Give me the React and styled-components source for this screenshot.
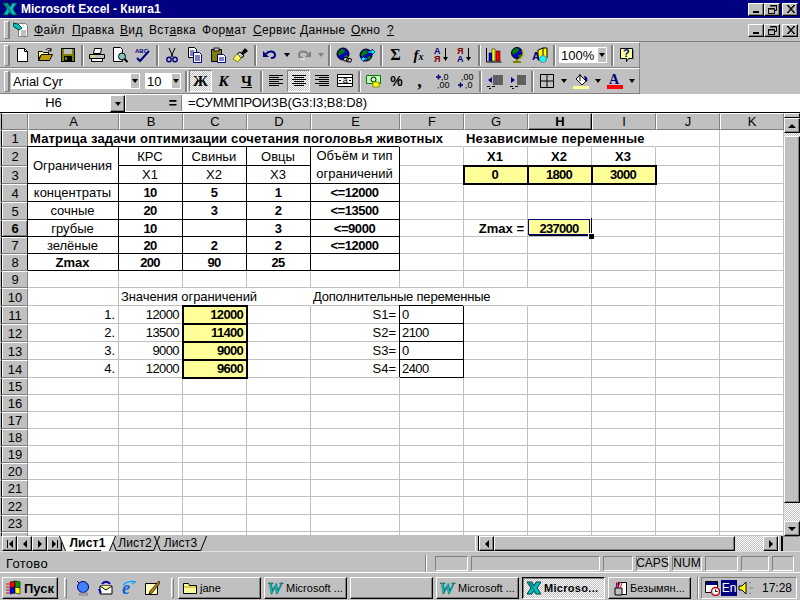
import React from 'react';
import styled, { createGlobalStyle, css } from 'styled-components';

const Global = createGlobalStyle`
  html, body { margin: 0; padding: 0; background: #c0c0c0; }
  * { box-sizing: border-box; }
`;
const raised = css`
  border: 1px solid;
  border-color: #fff #000 #000 #fff;
  box-shadow: inset -1px -1px 0 #808080;
  background: #c0c0c0;
`;
const sunken = css`
  border: 1px solid;
  border-color: #808080 #fff #fff #808080;
`;
const dither = css`
  background: repeating-conic-gradient(#fff 0 25%, #c0c0c0 0 50%) 0 0 / 2px 2px;
`;
const App_ = styled.div`
  width: 800px; height: 600px; overflow: hidden; display: flex; flex-direction: column;
  background: #c0c0c0; color: #000;
  font: 13px "Liberation Sans", Arial, sans-serif;
`;
const TitleBar = styled.div`
  height: 18px; background: #000080; color: #fff; display: flex; align-items: center;
  padding: 0 2px 0 2px; gap: 3px; font-weight: 700; font-size: 12px;
`;
const WinBtns = styled.div`display: flex; margin-left: auto;`;
const WinBtn = styled.div`
  ${raised}; width: 16px; height: 13px; display: flex; align-items: center; justify-content: center;
  margin-left: ${p => p.$gap ? 2 : 0}px;
`;
const MenuBar = styled.div`
  height: 24px; border-top: 1px solid #fff; border-bottom: 1px solid #808080;
  display: flex; align-items: center; padding: 0 2px 0 4px;
`;
const Grip = styled.div`
  width: 5px; height: ${p => p.$h || 21}px; flex: none;
  border: 1px solid; border-color: #fff #808080 #808080 #fff;
  box-shadow: 1px 0 0 #808080; margin-right: ${p => p.$mr || 0}px;
`;
const DocIcon = styled.div`width: 22px; margin-right: 2px; height: 16px; display: flex; justify-content: center; margin-left: 1px;`;
const MenuItem = styled.span`
  display: block; flex: none; width: ${p => p.$w}px; font-size: 12px; letter-spacing: .35px;
`;
const ToolArea = styled.div`width: 640px; display: flex; flex-direction: column;`;
const Toolbar = styled.div`
  height: 26px; display: flex; align-items: center; padding-left: 4px;
  border-top: 1px solid #fff; border-bottom: 1px solid #808080; border-right: 1px solid #808080;
`;
const ToolBtn = styled.div`
  width: 23px; height: 22px; flex: none; display: flex; align-items: center; justify-content: center;
  ${p => p.$pressed && css`${dither}; border: 1px solid; border-color: #808080 #fff #fff #808080;`}
`;
const Drop = styled.div`
  width: 11px; height: 22px; flex: none; display: flex; align-items: center; justify-content: center;
`;
const Caret = styled.i`
  display: block; width: 0; height: 0; border: solid transparent; border-width: 4px 3.5px 0;
  border-top-color: ${p => p.$off ? '#808080' : '#000'};
`;
const Sep = styled.div`
  width: 6px; flex: none; height: 21px; display: flex; justify-content: center;
  &::before { content: ''; width: 2px; height: 100%; background: #808080; border-right: 1px solid #fff; }
`;
const ComboBox = styled.div`
  width: ${p => p.$w}px; height: 16px; background: #fff; display: flex; align-items: center; flex: none;
  margin-left: ${p => p.$ml || 0}px; margin-right: ${p => p.$mr || 0}px; padding-left: 2px; font-size: 13px;
`;
const ComboArrow = styled.div`
  margin-left: auto; width: 10px; height: 100%; background: #c0c0c0; display: flex; align-items: center; justify-content: center;
  border: 1px solid #fff;
`;
const GlyphBold = styled.span`
  font: 700 ${p => p.$s || 14}px "Liberation Serif", serif; font-style: ${p => p.$i ? 'italic' : 'normal'};
  text-decoration: ${p => p.$u ? 'underline' : 'none'}; line-height: 1;
`;
const FormulaBar = styled.div`
  height: 19px; display: flex; background: #fff; border-bottom: 1px solid #000; padding-bottom: 1px; border-top: 1px solid #fff;
`;
const NameBox = styled.div`width: 110px; text-align: center; line-height: 16px; padding-right: 3px;`;
const NameArrow = styled.div`${raised}; width: 15px; height: 17px; display: flex; align-items: center; justify-content: center;`;
const FormulaGap = styled.div`
  width: 57px; background: #c0c0c0; border-left: 1px solid #fff; border-right: 1px solid #808080; font-weight: 700; font-size: 14px; line-height: 16px;
  text-align: right; padding-right: 4px;
`;
const FormulaText = styled.div`padding-left: 6px; line-height: 16px; flex: 1; letter-spacing: -.06px;`;
const SheetRow = styled.div`height: 423px; display: flex; border-left: 1px solid #c0c0c0;`;
const Sheet = styled.div`
  width: 783px; height: 423px; overflow: hidden; display: grid; background: #fff;
  grid-template-columns: 27px 91px 64px 64px 64px 89px 64px 64px 64px 64px 64px 64px;
  grid-template-rows: 17px 17px 19px 18px 18px 18px 17px 17px 17px 17px 18px 18px 18px 18px 18px 17px 17px 17px 17px 17px 17px 17px 18px 17px 4px;
`;
const headBevel = css`
  background: #c0c0c0; border: 1px solid;
  border-color: #fff #808080 #808080 #fff;
  ${p => p.$sel && 'border-color: #fff #000 #000 #fff; box-shadow: inset -1px -1px 0 #808080;'}
  font-weight: ${p => p.$sel ? 700 : 400};
  display: flex; align-items: center; justify-content: center; overflow: hidden;
`;
const Corner = styled.div`${headBevel}; border-left-color: #000;`;
const ColHead = styled.div`${headBevel}; line-height: 15px;`;
const RowHead = styled.div`
  ${headBevel}; border-left: 1px solid #000; box-shadow: inset 1px 0 0 #fff ${p => p.$sel ? ', inset -1px -1px 0 #808080' : ''};
  padding-left: 1px; grid-column: 1; grid-row: ${p => p.$row};
  ${p => p.$clip && 'align-items: flex-start; border-bottom: 0;'}
`;
const Cell = styled.div`
  position: relative; display: flex; align-items: center; white-space: nowrap; padding: 0 3px 0 2px; line-height: 1;
  grid-column: ${p => p.$col} / span ${p => p.$cs || 1};
  grid-row: ${p => p.$row} / span ${p => p.$rs || 1};
  border-right: 1px solid #c0c0c0; border-bottom: 1px solid #c0c0c0;
  border-left: ${p => p.$first ? '1px solid #c0c0c0' : '0'};
  justify-content: ${p => ({ c: 'center', r: 'flex-end', l: 'flex-start' }[p.$a || 'l'])};
  font-weight: ${p => p.$b ? 700 : 400};
  letter-spacing: ${p => p.$ls || 0}px;
  text-align: center;
  ${p => p.$noR && 'border-right-color: transparent;'}
  ${p => p.$box && css`
    border-right-color: #000; border-bottom-color: #000; box-shadow: -1px -1px 0 #000; z-index: 1;
  `}
  ${p => p.$thick && css`
    background: #ffff99; outline: 2px solid #000; outline-offset: -1px; border-color: transparent; z-index: 2;
  `}
  ${p => p.$yellow && 'background: #ffff99;'}
`;
const CellLines = styled.span`display: block; line-height: 18px;`;
const Selection = styled.div`
  position: absolute; left: 0; top: -1px; right: 1px; bottom: 1px; border: 1px solid #000080;
  &::before { content: ''; position: absolute; right: -3px; top: -2px; bottom: -2px; width: 1px; background: #000; }
  &::after { content: ''; position: absolute; left: 0; right: -3px; bottom: -2px; height: 1px; background: #000; }
`;
const Handle = styled.div`
  position: absolute; right: -5px; bottom: -5px; width: 6px; height: 6px; background: #000; border: 1px solid #fff; border-width: 1px 0 0 1px; z-index: 3;
`;
const VScroll = styled.div`width: 16px; height: 423px; display: flex; flex-direction: column;`;
const VSplit = styled.div`height: 5px; ${raised}; box-shadow: none;`;
const ArrowBtn = styled.div`
  ${raised}; width: ${p => p.$w || 16}px; height: ${p => p.$h || 15}px; flex: none; display: flex; align-items: center; justify-content: center;
`;
const Dither = styled.div`${dither}; flex: none; ${p => p.$h ? `height:${p.$h}px;` : ''} ${p => p.$w ? `width:${p.$w}px;` : ''}`;
const Thumb = styled.div`${raised}; flex: 1;`;
const TabRow = styled.div`
  height: 16px; display: flex; align-items: stretch; padding-left: 2px; border-bottom: 1px solid #dfdfdf;
`;
const TabNav = styled.div`
  ${raised}; width: 15px; display: flex; align-items: center; justify-content: center; flex: none;
`;
const Tabs = styled.div`display: flex; width: 413px; flex: none;`;
const Tab = styled.div`
  position: relative; width: ${p => p.$w}px; display: flex; align-items: center; justify-content: center; flex: none;
  font-weight: ${p => p.$on ? 700 : 400}; font-size: 12px; letter-spacing: .2px; z-index: ${p => p.$on ? 2 : 1};
  border-bottom: 1px solid #000; white-space: nowrap;
  background: ${p => p.$on ? '#fff' : 'transparent'}; margin: 0 4px;
  &::before, &::after {
    content: ''; position: absolute; top: 0; bottom: -1px; width: 8px; background: ${p => p.$on ? '#fff' : 'transparent'}; z-index: -1;
  }
  &::before { left: -4px; border-left: 1px solid #000; transform: skewX(22deg); }
  &::after { right: -4px; border-right: 1px solid #000; transform: skewX(-22deg); }
  & > span { position: relative; }
`;
const HSplit = styled.div`width: 4px; flex: none; background: #c0c0c0; border-left: 1px solid #fff; border-right: 1px solid #000;`;
const HThumb = styled.div`${raised}; width: 241px; flex: none;`;
const Corner2 = styled.div`width: 17px; flex: none; border-left: 1px solid #000; border-top: 1px solid #808080;`;
const StatusBar = styled.div`
  height: 20px; display: flex; align-items: center; padding: 2px 6px 0 6px; border-top: 1px solid transparent; gap: 3px; font-size: 13px;
`;
const Ready = styled.span`flex: 1; letter-spacing: .3px;`;
const StatusSep = styled.div`width: 2px; height: 18px; background: #808080; border-right: 1px solid #fff; margin-right: 5px;`;
const Panel = styled.div`
  ${sunken}; width: ${p => p.$w}px; height: 15px; flex: none; line-height: 13px; font-size: 12px;
  display: flex; justify-content: center; white-space: nowrap;
`;
const Taskbar = styled.div`
  height: 28px; display: flex; align-items: center; padding: 3px 3px 0 2px; border-top: 1px solid #fff;
`;
const StartBtn = styled.div`
  ${raised}; width: 56px; height: 22px; flex: none; display: flex; align-items: center; padding-left: 3px; gap: 2px;
  font-weight: 700; font-size: 13px;
`;
const TaskSep = styled.div`
  width: 2px; height: 22px; flex: none; background: #808080; border-right: 1px solid #fff; margin: 0 1px 0 3px;
`;
const TaskGrip = styled.div`
  width: 3px; height: 20px; flex: none; border: 1px solid; border-color: #fff #808080 #808080 #fff;
  margin: 0 ${p => p.$mr}px 0 ${p => p.$ml}px;
`;
const Quick = styled.div`width: 23px; display: flex; justify-content: center; flex: none;`;
const TaskBtn = styled.div`
  ${p => p.$on ? css`${dither}; border: 1px solid; border-color: #000 #fff #fff #000; box-shadow: inset 1px 1px 0 #808080; font-weight: 700; letter-spacing: .3px;` : raised};
  width: 83px; height: 22px; flex: none; margin-right: 3px; display: flex; align-items: center; gap: 2px; padding-left: 3px;
  white-space: nowrap; overflow: hidden; font-size: 11px;
`;
const Tray = styled.div`
  ${sunken}; width: 96px; height: 22px; flex: none; display: flex; align-items: center; padding-left: 2px; margin-left: auto;
`;
const EnBox = styled.div`width: 16px; height: 16px; background: #000080; color: #fff; line-height: 16px; text-align: center; flex: none; font-size: 12px; margin: 0 1px;`;
const Clock = styled.span`margin-left: 8px; font-size: 12px;`;
const Svg = ({ children, s = 16, w, h }) => <svg width={w || s} height={h || s} viewBox={`0 0 ${w || s} ${h || s}`} style={{ display: 'block', flex: 'none' }}>{children}</svg>;
const TinyText = styled.text`font: 700 6px "Liberation Sans", sans-serif;`;

const XLogo = () => <Svg><path d="M1 2h5l2 4 2-4h5l-4 6 4 6h-5l-2-4-2 4H1l4-6z" fill="#00c0c0" stroke="#004040" /><path d="M3 3h2l5 10h-1.500z" fill="#008080" /></Svg>;
const Min = () => <Svg w={8} h={8}><rect x="1" y="6" width="6" height="2" /></Svg>;
const Restore = () => <Svg w={9} h={9}><path d="M2.500.5h6v5h-2M.5 3.500h6v5h-6z" fill="none" stroke="#000" /><path d="M2 1h7M0 4h6" stroke="#000" /></Svg>;
const Close = () => <Svg w={9} h={8}><path d="M1 0l7 8M2 0l7 8M8 0L1 8M9 0L2 8" stroke="#000" /></Svg>;
const SheetDoc = () => <Svg><path d="M5.500 1.500h7l2 2v11h-9z" fill="#fff" stroke="#808080" /><path d="M0 1l5 1 4 4-3 2-5-3z" fill="#00c0c0" stroke="#004040" /><path d="M8 9h5M8 11h5M8 13h5" stroke="#808080" /></Svg>;
const NewI = () => <Svg><path d="M3.500 1.500h7l3 3v10h-10z" fill="#fff" stroke="#000" /><path d="M10.500 1.500v3h3" fill="none" stroke="#000" /></Svg>;
const OpenI = () => <Svg><path d="M1.500 4.500h4l1 1h5v3h-8l-2 5z" fill="#ffff99" stroke="#000" /><path d="M1.500 13.500l3-6h11l-3 6z" fill="#c0a000" stroke="#000" /><path d="M9 3c1-2 4-2 5 0M14 1v3h-3" fill="none" stroke="#000" /></Svg>;
const SaveI = () => <Svg><rect x="1.500" y="1.500" width="13" height="13" fill="#808000" stroke="#000" /><rect x="4" y="2" width="8" height="5" fill="#c0c0c0" /><rect x="4" y="9" width="8" height="5" fill="#000" /><rect x="5" y="10" width="2" height="3" fill="#808000" /></Svg>;
const PrintI = () => <Svg><path d="M5.500 1.500h7l-1 5h-7z" fill="#fff" stroke="#000" /><path d="M.5 7.500h15v4H.5z" fill="#c0c0c0" stroke="#000" /><path d="M2.500 11.500h11v3h-11z" fill="#fff" stroke="#000" /><path d="M3 9h3" stroke="#ff0" /></Svg>;
const PreviewI = () => <Svg><path d="M1.500.5h7l2 2v12h-9z" fill="#fff" stroke="#000" /><circle cx="10" cy="9.500" r="3.500" fill="#80c0c0" stroke="#000" /><path d="M12.500 12l3 3" stroke="#000" strokeWidth="2" /></Svg>;
const SpellI = () => <Svg><TinyText x="0" y="6" fill="#000080">ABC</TinyText><path d="M2 11l3 3 9-10" fill="none" stroke="#000080" strokeWidth="2" /></Svg>;
const CutI = () => <Svg><path d="M5 1l4 9M11 1L7 10" stroke="#000" fill="none" /><circle cx="5" cy="12.500" r="2.200" fill="none" stroke="#000080" strokeWidth="1.400" /><circle cx="11" cy="12.500" r="2.200" fill="none" stroke="#000080" strokeWidth="1.400" /></Svg>;
const CopyI = () => <Svg><path d="M1.500.5h6l2 2v8h-8z" fill="#fff" stroke="#000" /><path d="M6.500 5.500h6l2 2v8h-8z" fill="#fff" stroke="#000080" /><path d="M3 4h4M3 6h3M3 8h3M8 9h5M8 11h5M8 13h5" stroke="#000080" /></Svg>;
const PasteI = () => <Svg><path d="M1.500 2.500h10v12h-10z" fill="#808000" stroke="#000" /><rect x="4" y="1" width="5" height="3" fill="#c0c0c0" stroke="#000" strokeWidth=".8" /><path d="M7.500 7.500h6l2 2v6h-8z" fill="#fff" stroke="#000080" /><path d="M9 11h5M9 13h5" stroke="#000080" /></Svg>;
const PainterI = () => <Svg><path d="M12 1l3 3-5 4-2-2z" fill="#000" /><path d="M7 5l4 4-3 2-4-4z" fill="#c0c0c0" stroke="#000" /><path d="M4 7l4 4-3 4-5-3z" fill="#ffff66" stroke="#808000" /></Svg>;
const UndoI = () => <Svg><path d="M4 7c3-4 9-3 9 1 0 2-2 3-4 3" fill="none" stroke="#000080" strokeWidth="2" /><path d="M1 4v6h6z" fill="#000080" /></Svg>;
const RedoI = () => <Svg><path d="M12 7c-3-4-9-3-9 1 0 2 2 3 4 3" fill="none" stroke="#808080" strokeWidth="2" /><path d="M15 4v6H9z" fill="#808080" /><path d="M4 12h5" stroke="#fff" /></Svg>;
const Globe = ({ cx = 7, cy = 7, r = 6 }) => <><circle cx={cx} cy={cy} r={r} fill="#0000c0" stroke="#000" /><path d={`M${cx - 4} ${cy - 3}l3-2 3 1-1 3-3 1-1 2-2-2zM${cx + 1} ${cy + 2}l3-1 1 2-3 2z`} fill="#008000" /></>;
const WebI = () => <Svg><Globe /><rect x="7.500" y="10.500" width="5" height="3.500" rx="1.500" fill="#c0c0c0" stroke="#000" /><rect x="10.500" y="11.500" width="5" height="3.500" rx="1.500" fill="none" stroke="#000" /></Svg>;
const GlobeArrowI = () => <Svg><Globe cx={7} cy={8} /><path d="M9 4h4V2l3 3-3 3V6H9zM8 11h-3V9l-3 3 3 3v-2h3z" fill="#00ffff" stroke="#000080" strokeWidth=".7" /></Svg>;
const Sigma = () => <GlyphBold $s={16}>Σ</GlyphBold>;
const FxI = () => <GlyphBold $s={15} $i>f<small style={{ fontSize: 10 }}>x</small></GlyphBold>;
const SortI = ({ rev }) => <Svg><TinyText x="0" y="7" fill={rev ? '#800000' : '#000080'} style={{ fontSize: 9 }}>{rev ? 'Я' : 'А'}</TinyText><TinyText x="0" y="15" fill={rev ? '#000080' : '#800000'} style={{ fontSize: 9 }}>{rev ? 'А' : 'Я'}</TinyText><path d="M11.500 1v10" stroke="#000" /><path d="M9 10h5l-2.500 4z" /></Svg>;
const ChartI = () => <Svg><path d="M.500 1v14h15" stroke="#000" fill="none" /><rect x="3" y="6" width="3" height="8" fill="#0000ff" stroke="#000" strokeWidth=".5" /><rect x="6" y="2" width="3" height="12" fill="#ffff00" stroke="#000" strokeWidth=".5" /><rect x="10" y="4" width="4" height="10" fill="#ff0000" stroke="#000" strokeWidth=".5" /></Svg>;
const MapI = () => <Svg><Globe cx={8} cy={6} r={5.500} /><path d="M4 15h8M8 12v3" stroke="#808000" strokeWidth="2" /><path d="M13 3c2 3 1 7-3 9" fill="none" stroke="#c0a000" strokeWidth="1.500" /></Svg>;
const DrawI = () => <Svg><path d="M6 3l5-2h4v10l-4 2H6z" fill="#ffff00" stroke="#000" /><path d="M11 1v12" stroke="#000" /><TinyText x="0" y="13" fill="#000080" style={{ fontSize: 11 }}>A</TinyText><circle cx="11" cy="12" r="3.500" fill="#00ffff" stroke="#808080" /></Svg>;
const HelpI = () => <Svg><path d="M1.500 1.500h12v10h-4l-2 3v-3h-6z" fill="#ffff99" stroke="#000" /><path d="M14.500 3v10" stroke="#808080" /><text x="4" y="10" fill="#000080" style={{ font: '700 11px "Liberation Sans"' }}>?</text></Svg>;
const Lines = ({ rows }) => <Svg>{rows.map((r, i) => <path key={i} d={`M${r[0]} ${i * 2 + 2.500}h${r[1]}`} stroke="#000" />)}</Svg>;
const AL = () => <Lines rows={[[1, 14], [1, 10], [1, 14], [1, 10], [1, 14], [1, 10]]} />;
const AC = () => <Lines rows={[[1, 14], [3, 10], [1, 14], [3, 10], [1, 14], [3, 10]]} />;
const AR = () => <Lines rows={[[1, 14], [5, 10], [1, 14], [5, 10], [1, 14], [5, 10]]} />;
const MergeI = () => <Svg><path d="M.500 1.500h15v12H.500zM.500 4.500h15M.500 10.500h15" fill="#fff" stroke="#000" /><text x="5.800" y="10" style={{ font: '9px "Liberation Sans"' }}>a</text><path d="M2 7.500h2M14 7.500h-2" stroke="#000" /></Svg>;
const CurrencyI = () => <Svg><path d="M.500 2.500h14v8H.500z" fill="#c0ffc0" stroke="#008000" /><circle cx="7.500" cy="6.500" r="2.500" fill="none" stroke="#000" /><path d="M7 9h6v5H7z" fill="#ffff00" stroke="#808000" strokeWidth=".8" /></Svg>;
const Percent = styled.span`font-weight: 700; font-size: 14px;`;
const Comma = () => <GlyphBold $s={18}>,</GlyphBold>;
const SmallNum = styled.text`font: 9px "Liberation Sans", sans-serif;`;
const IncDec = () => <Svg w={18} h={16}><SmallNum x="7" y="7">,0</SmallNum><SmallNum x="3" y="15">,00</SmallNum><path d="M2 4h5M4.500 1.500v5" stroke="#000080" strokeWidth="1.500" /></Svg>;
const DecDec = () => <Svg w={18} h={16}><SmallNum x="4" y="7">,00</SmallNum><SmallNum x="8" y="15">,0</SmallNum><path d="M1 12h5M3.500 9.500v5" stroke="#000080" strokeWidth="1.500" /></Svg>;
const IndentL = () => <Svg><path d="M6 3h10M6 5h10M6 7h10M6 9h10M6 11h10" stroke="#000" /><path d="M1 7l4-3v6z" fill="#000080" /><path d="M0 13.500h3M5 13.500h3M2 15.500h2" stroke="#000" /></Svg>;
const IndentR = () => <Svg><path d="M7 3h9M7 5h9M7 7h9M7 9h9M7 11h9" stroke="#000" /><path d="M5 7L1 4v6z" fill="#000080" /><path d="M0 13.500h3M5 13.500h3M2 15.500h2" stroke="#000" /></Svg>;
const BordersI = () => <Svg w={14} h={14}><path d="M.500.500h13v13H.500zM7 .500v13M.500 7h13" fill="none" stroke="#000" /></Svg>;
const FillI = () => <Svg><path d="M3 6l4-4 6 6-4 4z" fill="#fff" stroke="#000" /><path d="M7 1v7" stroke="#000" /><path d="M11 3c3 0 4 3 3 6l-2-2z" fill="#000080" /><rect y="13" width="16" height="4" fill="#ffff99" /></Svg>;
const ColorI = () => <Svg><text x="2" y="11" fill="#000080" style={{ font: '700 14px "Liberation Serif"' }}>A</text><rect y="12" width="16" height="4" fill="#ff0000" /></Svg>;
const Tri = ({ d }) => {
  const p = { u: 'M4 0l4 4H0z', d: 'M0 0h8L4 4z', l: 'M4 0v8L0 4z', r: 'M0 0v8l4-4z' }[d];
  const vert = d === 'u' || d === 'd';
  return <Svg w={vert ? 8 : 4} h={vert ? 4 : 8}><path d={p} /></Svg>;
};
const TabFirst = () => <Svg w={6} h={8}><path d="M0 0h1v8H0zM6 0v8L2 4z" /></Svg>;
const TabLast = () => <Svg w={6} h={8}><path d="M5 0h1v8H5zM0 0v8l4-4z" /></Svg>;
const FlagI = () => <Svg><path d="M4 2l5-1v6l-5 1z" fill="#ff0000" stroke="#000" strokeWidth=".6" /><path d="M9 1l5 1v6l-5-1z" fill="#00a000" stroke="#000" strokeWidth=".6" /><path d="M4 8l5-1v6l-5 1z" fill="#0000ff" stroke="#000" strokeWidth=".6" /><path d="M9 7l5 1v6l-5-1z" fill="#ffff00" stroke="#000" strokeWidth=".6" /><path d="M0 4h3M0 7h3M0 10h3M0 13h3" stroke="#f00" /></Svg>;
const DishI = () => <Svg><path d="M2 1l9 9" stroke="#000" /><ellipse cx="8" cy="7" rx="5.500" ry="5.500" fill="#4080ff" stroke="#000080" /><path d="M5 13h7l1 2H4z" fill="#c0c0c0" stroke="#808080" /></Svg>;
const OutlookI = () => <Svg><path d="M2 6h12v8H2z" fill="#fff" stroke="#000" /><path d="M2 6l6 4 6-4" fill="#ffff99" stroke="#000" /><path d="M4 4c2-3 6-3 8 0" fill="none" stroke="#0000c0" strokeWidth="2" /><path d="M1 9l2 4" stroke="#0000c0" strokeWidth="2" /></Svg>;
const IEI = () => <Svg><text x="1" y="14" fill="#0060e0" style={{ font: 'italic 700 18px "Liberation Serif"' }}>e</text><path d="M2 5c4-4 10-4 13-3-2 0-3 1-4 2" fill="none" stroke="#00a0ff" strokeWidth="1.200" /></Svg>;
const NoteI = () => <Svg><path d="M1.500 3.500h12v11h-12z" fill="#ffffc0" stroke="#000" /><path d="M15 1L6 11l-1 3 3-1 8-10z" fill="#c08000" stroke="#000" strokeWidth=".7" /></Svg>;
const FolderI = () => <Svg><path d="M1.500 3.500h5l1 2h7v8h-13z" fill="#ffff99" stroke="#000" /><path d="M2 7h12" stroke="#c0a000" /></Svg>;
const WordI = () => <Svg><text x="-1" y="14" fill="#00c0c0" stroke="#004040" strokeWidth=".4" style={{ font: 'italic 700 17px "Liberation Serif"' }}>W</text></Svg>;
const PaintI = () => <Svg><path d="M6.500 2.500h8v12h-8z" fill="#fff" stroke="#000" /><path d="M3 8h7v7H3z" fill="#c0c0c0" stroke="#000" /><path d="M4 8l1-6M6 8l2-6M8 8l2-5" stroke="#f00" /><path d="M5 8l0-5" stroke="#00f" /></Svg>;
const CalendarI = () => <Svg><path d="M1.500 1.500h12v11h-12z" fill="#fff" stroke="#000" /><rect x="2" y="2" width="11" height="3" fill="#000080" /><circle cx="11.500" cy="11.500" r="4" fill="#fff" stroke="#c00000" strokeWidth="1.500" /><path d="M11.500 9.500v2h2" stroke="#000" fill="none" /></Svg>;
const SpeakerI = () => <Svg><path d="M1 6h3l4-4v12l-4-4H1z" fill="#ffff00" stroke="#000" /><path d="M11 3l2-1M11 8h4M11 13l2 1" stroke="#808080" /></Svg>;

const COLS = 'ABCDEFGHIJK'.split('');
const ROWN = Array.from({ length: 24 }, (_, i) => i + 1);
const C = Object.fromEntries(COLS.map((c, i) => [c, i + 2]));
const R = n => n + 1;
const NUM = -.6;
const BNUM = -.7;

const spec = [
  ['A', 1, 'Матрица задачи оптимизации сочетания поголовья животных', { $cs: 6, $b: 1, $ls: .18 }],
  ['G', 1, 'Независимые переменные', { $cs: 3, $b: 1, $ls: .22, $noR: 1 }],
  ['A', 2, 'Ограничения', { $rs: 2, $a: 'c', $box: 1 }],
  ['B', 2, 'КРС', { $a: 'c', $box: 1 }], ['C', 2, 'Свиньи', { $a: 'c', $box: 1 }], ['D', 2, 'Овцы', { $a: 'c', $box: 1 }],
  ['E', 2, <CellLines>Объём и тип<br />ограничений</CellLines>, { $rs: 2, $a: 'c', $box: 1 }],
  ['B', 3, 'Х1', { $a: 'c', $box: 1 }], ['C', 3, 'Х2', { $a: 'c', $box: 1 }], ['D', 3, 'Х3', { $a: 'c', $box: 1 }],
  ['G', 2, 'Х1', { $a: 'c', $b: 1 }], ['H', 2, 'Х2', { $a: 'c', $b: 1 }], ['I', 2, 'Х3', { $a: 'c', $b: 1 }],
  ['G', 3, '0', { $a: 'c', $b: 1, $thick: 1 }], ['H', 3, '1800', { $a: 'c', $b: 1, $thick: 1, $ls: BNUM }], ['I', 3, '3000', { $a: 'c', $b: 1, $thick: 1, $ls: BNUM }],
  ...[
    [4, 'концентраты', '10', '5', '1', '<=12000'],
    [5, 'сочные', '20', '3', '2', '<=13500'],
    [6, 'грубые', '10', '', '3', '<=9000'],
    [7, 'зелёные', '20', '2', '2', '<=12000'],
    [8, 'Zmax', '200', '90', '25', ''],
  ].flatMap(([r, a, b, c, d, e]) => [
    ['A', r, a, { $a: 'c', $box: 1, $b: r === 8 }],
    ['B', r, b, { $a: 'c', $box: 1, $b: 1, $ls: BNUM }], ['C', r, c, { $a: 'c', $box: 1, $b: 1, $ls: BNUM }],
    ['D', r, d, { $a: 'c', $box: 1, $b: 1, $ls: BNUM }], ['E', r, e, { $a: 'c', $box: 1, $b: 1, $ls: -.45 }],
  ]),
  ['G', 6, 'Zmax =', { $a: 'r', $b: 1 }],
  ['B', 10, 'Значения ограничений', { $cs: 3, $ls: -.08 }],
  ['E', 10, 'Дополнительные переменные', { $cs: 3, $ls: -.2 }],
  ...[[11, '1.', '12000', '12000', 'S1=', '0'], [12, '2.', '13500', '11400', 'S2=', '2100'], [13, '3.', '9000', '9000', 'S3=', '0'], [14, '4.', '12000', '9600', 'S4=', '2400']]
    .flatMap(([r, a, b, c, e, f]) => [
      ['A', r, a, { $a: 'r' }], ['B', r, b, { $a: 'r', $ls: NUM }],
      ['C', r, c, { $a: 'r', $b: 1, $thick: 1, $ls: BNUM }],
      ['E', r, e, { $a: 'r' }], ['F', r, f, { $box: 1, $ls: NUM }],
    ]),
];
const taken = new Set();
spec.forEach(([c, r, , o]) => {
  const ci = COLS.indexOf(c);
  for (let i = 0; i < (o.$cs || 1); i++) for (let j = 0; j < (o.$rs || 1); j++) taken.add(COLS[ci + i] + (r + j));
});
const plain = [];
ROWN.forEach(r => COLS.forEach(c => { if (!taken.has(c + r) && !(c === 'H' && r === 6)) plain.push([c, r]); }));

const menus = [['Ф', 'айл', '', 38], ['П', 'равка', '', 48], ['В', 'ид', '', 29], ['Вст', 'а', 'вка', 53], ['Фор', 'м', 'ат', 51], ['С', 'ервис', '', 47], ['Д', 'анные', '', 51], ['О', 'кно', '', 36], ['?', '', '', 12]];
const renderMenu = ([a, b, c, w], i) => {
  const mid = i === 3 || i === 4;
  return <MenuItem key={i} $w={w}>{mid ? <>{a}<u>{b}</u>{c}</> : <><u>{a}</u>{b}</>}</MenuItem>;
};

export default function App() {
  return (
    <App_>
      <Global />
      <TitleBar>
        <XLogo />
        <span>Microsoft Excel - Книга1</span>
        <WinBtns><WinBtn><Min /></WinBtn><WinBtn><Restore /></WinBtn><WinBtn $gap><Close /></WinBtn></WinBtns>
      </TitleBar>
      <MenuBar>
        <Grip $h={18} />
        <DocIcon><SheetDoc /></DocIcon>
        {menus.map(renderMenu)}
        <WinBtns><WinBtn><Min /></WinBtn><WinBtn><Restore /></WinBtn><WinBtn $gap><Close /></WinBtn></WinBtns>
      </MenuBar>
      <ToolArea>
        <Toolbar>
          <Grip $mr={1} />
          <ToolBtn><NewI /></ToolBtn><ToolBtn><OpenI /></ToolBtn><ToolBtn><SaveI /></ToolBtn><Sep />
          <ToolBtn><PrintI /></ToolBtn><ToolBtn><PreviewI /></ToolBtn><ToolBtn><SpellI /></ToolBtn><Sep />
          <ToolBtn><CutI /></ToolBtn><ToolBtn><CopyI /></ToolBtn><ToolBtn><PasteI /></ToolBtn><ToolBtn><PainterI /></ToolBtn><Sep />
          <ToolBtn><UndoI /></ToolBtn><Drop><Caret /></Drop><ToolBtn><RedoI /></ToolBtn><Drop><Caret $off /></Drop><Sep />
          <ToolBtn><WebI /></ToolBtn><ToolBtn><GlobeArrowI /></ToolBtn><Sep />
          <ToolBtn><Sigma /></ToolBtn><ToolBtn><FxI /></ToolBtn><ToolBtn><SortI /></ToolBtn><ToolBtn><SortI rev /></ToolBtn><Sep />
          <ToolBtn><ChartI /></ToolBtn><ToolBtn><MapI /></ToolBtn><ToolBtn><DrawI /></ToolBtn><Sep />
          <ComboBox $w={48} $ml={2} $mr={2}>100%<ComboArrow><Caret /></ComboArrow></ComboBox><Sep />
          <ToolBtn><HelpI /></ToolBtn>
        </Toolbar>
        <Toolbar>
          <Grip $mr={2} />
          <ComboBox $w={129} $mr={5}>Arial Cyr<ComboArrow><Caret /></ComboArrow></ComboBox>
          <ComboBox $w={36} $mr={2}>10<ComboArrow><Caret /></ComboArrow></ComboBox><Sep />
          <ToolBtn $pressed><GlyphBold $s={15}>Ж</GlyphBold></ToolBtn><ToolBtn><GlyphBold $s={15} $i>К</GlyphBold></ToolBtn><ToolBtn><GlyphBold $s={15} $u>Ч</GlyphBold></ToolBtn><Sep />
          <ToolBtn><AL /></ToolBtn><ToolBtn $pressed><AC /></ToolBtn><ToolBtn><AR /></ToolBtn><ToolBtn><MergeI /></ToolBtn><Sep />
          <ToolBtn><CurrencyI /></ToolBtn><ToolBtn><Percent>%</Percent></ToolBtn><ToolBtn><Comma /></ToolBtn><ToolBtn><IncDec /></ToolBtn><ToolBtn><DecDec /></ToolBtn><Sep />
          <ToolBtn><IndentL /></ToolBtn><ToolBtn><IndentR /></ToolBtn><Sep />
          <ToolBtn><BordersI /></ToolBtn><Drop><Caret /></Drop>
          <ToolBtn><FillI /></ToolBtn><Drop><Caret /></Drop>
          <ToolBtn><ColorI /></ToolBtn><Drop><Caret /></Drop>
        </Toolbar>
      </ToolArea>
      <FormulaBar>
        <NameBox>H6</NameBox>
        <NameArrow><Caret /></NameArrow>
        <FormulaGap>=</FormulaGap>
        <FormulaText>=СУММПРОИЗВ(G3:I3;B8:D8)</FormulaText>
      </FormulaBar>
      <SheetRow>
        <Sheet>
          <Corner />
          {COLS.map(c => <ColHead key={c} $sel={c === 'H'}>{c}</ColHead>)}
          {ROWN.map(n => <RowHead key={n} $row={R(n)} $sel={n === 6} $clip={n === 24}>{n}</RowHead>)}
          {plain.map(([c, r]) => <Cell key={c + r} $col={C[c]} $row={R(r)} />)}
          {spec.map(([c, r, t, o]) => <Cell key={c + r} $col={C[c]} $row={R(r)} {...o} $noR={o.$cs > 1 || o.$noR}>{t}</Cell>)}
          <Cell $col={C.H} $row={R(6)} $a="c" $b $yellow $ls={BNUM}>237000<Selection><Handle /></Selection></Cell>
        </Sheet>
        <VScroll>
          <VSplit />
          <ArrowBtn><Tri d="u" /></ArrowBtn>
          <Dither $h={3} />
          <Thumb />
          <Dither $h={18} />
          <ArrowBtn><Tri d="d" /></ArrowBtn>
        </VScroll>
      </SheetRow>
      <TabRow>
        <TabNav><TabFirst /></TabNav><TabNav><Tri d="l" /></TabNav><TabNav><Tri d="r" /></TabNav><TabNav><TabLast /></TabNav>
        <Tabs>
          <Tab $on $w={43}><span>Лист1</span></Tab>
          <Tab $w={36}><span>Лист2</span></Tab>
          <Tab $w={39}><span>Лист3</span></Tab>
        </Tabs>
        <HSplit />
        <ArrowBtn $w={15}><Tri d="l" /></ArrowBtn>
        <HThumb />
        <Dither $w={28} />
        <ArrowBtn $w={15}><Tri d="r" /></ArrowBtn>
        <HSplit />
        <Corner2 />
      </TabRow>
      <StatusBar>
        <Ready>Готово</Ready>
        <StatusSep />
        {[[33, ''], [129, ''], [30, ''], [33, 'CAPS'], [30, 'NUM'], [33, ''], [28, ''], [22, '']].map(([w, t], i) => <Panel key={i} $w={w}>{t}</Panel>)}
      </StatusBar>
      <Taskbar>
        <StartBtn><FlagI />Пуск</StartBtn>
        <TaskGrip $ml={6} $mr={4} />
        <Quick><DishI /></Quick><Quick><OutlookI /></Quick><Quick><IEI /></Quick><Quick><NoteI /></Quick>
        <TaskGrip $ml={8} $mr={4} />
        <TaskBtn><FolderI />jane</TaskBtn>
        <TaskBtn><WordI />Microsoft ...</TaskBtn>
        <TaskBtn />
        <TaskBtn><WordI />Microsoft ...</TaskBtn>
        <TaskBtn $on><XLogo />Microso...</TaskBtn>
        <TaskBtn><PaintI />Безымян...</TaskBtn>
        <TaskSep />
        <Tray><CalendarI /><EnBox>En</EnBox><SpeakerI /><Clock>17:28</Clock></Tray>
      </Taskbar>
    </App_>
  );
}
